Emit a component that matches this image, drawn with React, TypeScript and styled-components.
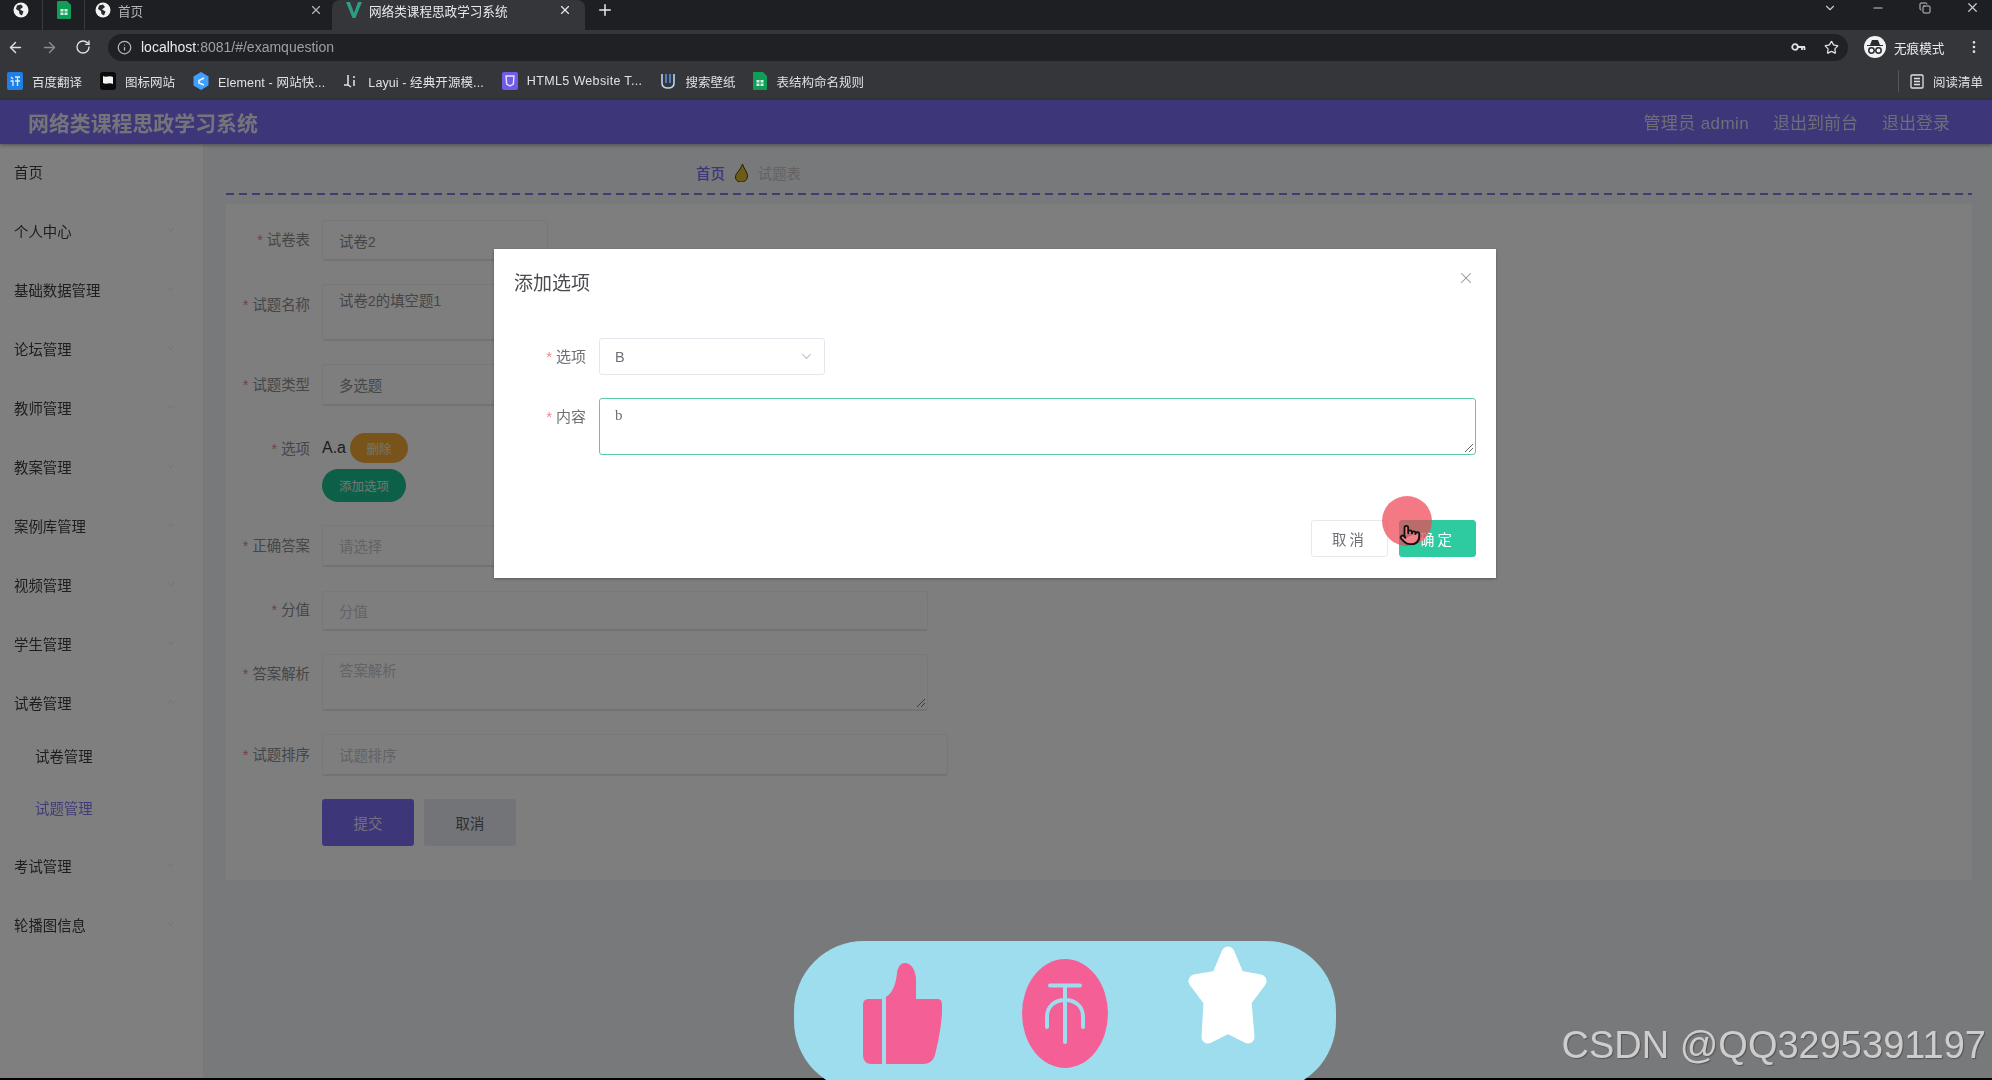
import styled, { createGlobalStyle } from "styled-components";
import {
  ArrowLeft,
  ArrowRight,
  ChevronDown,
  ChevronUp,
  Copy,
  Info,
  Minus,
  MoreVertical,
  Plus,
  Pointer,
  RotateCw,
  Star,
  X,
} from "lucide-react";

const GlobalStyle = createGlobalStyle`
  html, body {
    margin: 0;
    padding: 0;
    background: #000;
    overflow: hidden;
  }
  * {
    box-sizing: border-box;
  }
`;

const FONT = `"Liberation Sans", "Noto Sans CJK SC", sans-serif`;

const Page = styled.div`
  position: relative;
  width: 1992px;
  height: 1080px;
  overflow: hidden;
  background: #000;
  font-family: ${FONT};
`;

/*----------------------------------
	Browser chrome
----------------------------------*/
const Chrome = styled.div`
  filter: blur(0.5px);
`;

const TabStrip = styled.div`
  height: 30px;
  background: #1e1f22;
  display: flex;
  align-items: stretch;
  padding-right: 12px;
`;

const PinnedTab = styled.div`
  width: 42px;
  padding-bottom: 10px;
  display: flex;
  align-items: center;
  justify-content: center;
  border-right: 1px solid #3a3b3f;
  &:first-child {
    width: 43px;
  }
`;

const Tab = styled.div<{ $active?: boolean }>`
  width: ${(p) => (p.$active ? "253px" : "247px")};
  display: flex;
  align-items: center;
  gap: 7px;
  padding: 0 ${(p) => (p.$active ? "13px" : "9px")} 10px ${(p) => (p.$active ? "14px" : "10px")};
  background: ${(p) => (p.$active ? "#35363a" : "transparent")};
  border-radius: 8px 8px 0 0;
  color: ${(p) => (p.$active ? "#e8eaed" : "#b4b6b9")};
  font-size: 12.6px;
`;

const TabTitle = styled.span`
  flex: 1;
  white-space: nowrap;
`;

const NewTab = styled.div`
  width: 40px;
  padding-bottom: 10px;
  display: flex;
  align-items: center;
  justify-content: center;
  color: #e8eaed;
`;

const WindowControls = styled.div`
  margin-left: auto;
  display: flex;
  align-items: center;
  gap: 34px;
  padding-bottom: 15px;
  color: #c6c8cb;
`;

const Toolbar = styled.div`
  height: 34px;
  background: #35363a;
  display: flex;
  align-items: center;
  padding: 0 9px 0 7px;
  color: #dfe1e4;
`;

const NavIcons = styled.div`
  width: 101px;
  display: flex;
  align-items: center;
  gap: 17px;
`;

const AddressBar = styled.div`
  width: 1740px;
  height: 27px;
  border-radius: 14px;
  background: #202124;
  display: flex;
  align-items: center;
  gap: 9px;
  padding: 0 9px 0 9px;
  font-size: 14px;
  color: #e8eaed;
`;

const UrlRest = styled.span`
  color: #9aa0a6;
`;

const AddressActions = styled.div`
  margin-left: auto;
  display: flex;
  align-items: center;
  gap: 18px;
  color: #dfe1e4;
`;

const Incognito = styled.div`
  margin-left: 16px;
  display: flex;
  align-items: center;
  gap: 8px;
  font-size: 12.6px;
  color: #e8eaed;
`;

const IncognitoBadge = styled.div`
  width: 22px;
  height: 22px;
  border-radius: 50%;
  background: #f1f3f4;
  display: flex;
  align-items: center;
  justify-content: center;
`;

const MenuDots = styled.div`
  margin-left: 22px;
  display: flex;
`;

const BookmarkBar = styled.div`
  height: 36px;
  background: #35363a;
  display: flex;
  align-items: center;
  gap: 18px;
  padding: 0 9px 2px 7px;
  font-size: 12.5px;
  color: #dfe1e4;
`;

const Bookmark = styled.div<{ $spacing?: number }>`
  display: flex;
  align-items: center;
  gap: 9px;
  white-space: nowrap;
  letter-spacing: ${(p) => p.$spacing ?? 0}px;
`;

const ReadingList = styled(Bookmark)`
  margin-left: auto;
  border-left: 1px solid #55565a;
  padding-left: 11px;
  height: 22px;
`;

/*----------------------------------
	Site
----------------------------------*/
const Site = styled.div`
  height: 978px;
  display: flex;
  flex-direction: column;
  filter: blur(0.6px);
`;

const SiteHeader = styled.header`
  height: 44px;
  flex: none;
  background: #7a6cf0;
  box-shadow: 0 1px 4px rgba(0, 0, 0, 0.4);
  display: flex;
  align-items: center;
  padding: 0 42px 0 28px;
  position: relative;
`;

const SiteTitle = styled.div`
  font-size: 20.9px;
  font-weight: 700;
  color: #e8e8f5;
`;

const HeaderLinks = styled.div`
  margin-left: auto;
  display: flex;
  gap: 24px;
  padding-bottom: 2px;
  font-size: 17px;
  color: #dcdcef;
`;

const HeaderUser = styled.span`
  letter-spacing: 0.4px;
`;

const SiteBody = styled.div`
  flex: 1;
  display: flex;
  min-height: 0;
`;

const Sidebar = styled.nav`
  width: 203px;
  flex: none;
  background: #fff;
  box-shadow: 2px 0 12px rgba(0, 0, 0, 0.08);
`;

const MenuItem = styled.div`
  height: 59px;
  display: flex;
  align-items: center;
  justify-content: space-between;
  padding: 0 26px 5px 14px;
  font-size: 14.4px;
  color: #3c3c3c;
  svg {
    color: #e6e6e6;
  }
`;

const SubMenuItem = styled.div<{ $active?: boolean }>`
  height: 52px;
  padding: 0 0 9px 35px;
  display: flex;
  align-items: center;
  font-size: 14.4px;
  color: ${(p) => (p.$active ? "#8378f0" : "#3c3c3c")};
`;

const Main = styled.main`
  flex: 1;
  background: #f1f2f5;
  padding: 0 20px 0 23px;
`;

const Breadcrumb = styled.div`
  height: 51px;
  background: repeating-linear-gradient(90deg, #8077e6 0 8px, transparent 8px 13px) bottom / 100% 2px no-repeat;
  display: flex;
  align-items: center;
  gap: 10px;
  padding: 6px 0 0 470px;
  font-size: 14.4px;
  color: #c6c6c8;
`;

const Crumb = styled.span`
  color: #7a6cf0;
  font-weight: 500;
`;

const FormCard = styled.div`
  margin-top: 9px;
  height: 676px;
  background: #fcfcfd;
  padding-top: 16px;
  display: flex;
  flex-direction: column;
  gap: 23px;
`;

const Row = styled.div`
  display: flex;
  align-items: flex-start;
`;

const Label = styled.label<{ $line?: number }>`
  width: 84px;
  margin-right: 12px;
  text-align: right;
  line-height: ${(p) => p.$line ?? 40}px;
  font-size: 14.4px;
  color: #8a8c90;
  white-space: nowrap;
  &::before {
    content: "*";
    color: #e8828a;
    margin-right: 4px;
  }
`;

const Field = styled.div<{ $w: number; $h: number; $top?: boolean }>`
  position: relative;
  width: ${(p) => p.$w}px;
  height: ${(p) => p.$h}px;
  border: 1px solid #f0f0f2;
  border-bottom: 2px solid #e6e6e8;
  border-radius: 3px;
  background: #fdfdfd;
  display: flex;
  align-items: ${(p) => (p.$top ? "flex-start" : "center")};
  padding: ${(p) => (p.$top ? "4px 16px" : "0 16px")};
  font-size: 14.4px;
  color: #8a8c90;
  svg {
    color: #c0c4cc;
  }
`;

const Placeholder = styled.span`
  color: #c4c6cc;
`;

const Grip = styled.svg`
  position: absolute;
  right: 1px;
  bottom: 1px;
`;

const OptionGroup = styled.div`
  display: flex;
  flex-direction: column;
  gap: 1px;
  margin-top: -1px;
  align-items: flex-start;
`;

const OptionLine = styled.div`
  height: 40px;
  display: flex;
  align-items: center;
  gap: 4px;
  font-size: 16px;
  color: #3a3a3a;
`;

const PillButton = styled.div<{ $bg: string; $w: number; $h: number }>`
  width: ${(p) => p.$w}px;
  height: ${(p) => p.$h}px;
  border-radius: 17px;
  background: ${(p) => p.$bg};
  color: #e9e9e9;
  font-size: 12.5px;
  display: flex;
  align-items: center;
  justify-content: center;
`;

const FormButtons = styled.div`
  display: flex;
  gap: 10px;
  margin-left: 96px;
`;

const FormButton = styled.div<{ $bg: string; $color: string }>`
  width: 92px;
  height: 47px;
  border-radius: 3px;
  background: ${(p) => p.$bg};
  color: ${(p) => p.$color};
  font-size: 14.4px;
  display: flex;
  align-items: center;
  justify-content: center;
`;

/*----------------------------------
	Dialog
----------------------------------*/
const Mask = styled.div`
  position: absolute;
  left: 0;
  right: 0;
  top: 100px;
  height: 978px;
  background: rgba(0, 0, 0, 0.5);
  padding: 149px 2px 0 0;
`;

const Dialog = styled.div`
  position: relative;
  width: 1002px;
  height: 329px;
  margin: 0 auto;
  background: #fff;
  box-shadow: 0 1px 3px rgba(0, 0, 0, 0.3);
  padding: 20px 20px 21px;
  display: flex;
  flex-direction: column;
  filter: blur(0.6px);
`;

const DialogHead = styled.div`
  display: flex;
  align-items: flex-start;
  justify-content: space-between;
  height: 69px;
`;

const DialogTitle = styled.div`
  font-size: 19px;
  line-height: 30px;
  color: #4a4c50;
`;

const CloseIcon = styled.div`
  display: flex;
  color: #909399;
  margin: 0 1px 0 0;
`;

const DialogRow = styled.div`
  display: flex;
  align-items: flex-start;
  margin-bottom: 23px;
`;

const DialogLabel = styled.label`
  width: 85px;
  text-align: right;
  padding-right: 13px;
  line-height: 37px;
  font-size: 15px;
  color: #6e7076;
  white-space: nowrap;
  &::before {
    content: "*";
    color: #f0888a;
    margin-right: 4px;
  }
`;

const DialogSelect = styled.div`
  width: 226px;
  height: 37px;
  border: 1px solid #e4e7ed;
  border-radius: 3px;
  display: flex;
  align-items: center;
  justify-content: space-between;
  padding: 0 10px 0 15px;
  font-size: 14.4px;
  color: #6e7076;
  svg {
    color: #c0c4cc;
  }
`;

const DialogText = styled.div`
  position: relative;
  width: 877px;
  height: 57px;
  border: 1.5px solid #5cc9a7;
  border-radius: 3px;
  padding: 8px 15px;
  font-size: 15px;
  font-family: "Liberation Serif", serif;
  color: #6e7076;
`;

const DialogFoot = styled.div`
  margin-top: auto;
  display: flex;
  justify-content: flex-end;
  gap: 11px;
`;

const DialogButton = styled.div<{ $primary?: boolean }>`
  width: 77px;
  height: 37px;
  border-radius: 3px;
  display: flex;
  align-items: center;
  justify-content: center;
  letter-spacing: 3px;
  font-size: 14.4px;
  background: ${(p) => (p.$primary ? "#2fcba0" : "#fff")};
  color: ${(p) => (p.$primary ? "#fff" : "#6e7076")};
  border: 1px solid ${(p) => (p.$primary ? "#2fcba0" : "#e8e8ea")};
`;

const ClickHalo = styled.div`
  position: absolute;
  left: 888px;
  top: 247px;
  width: 50px;
  height: 50px;
  border-radius: 50%;
  background: rgba(238, 70, 85, 0.72);
  display: flex;
  align-items: center;
  justify-content: center;
  padding: 28px 0 0 6px;
  color: #111;
  svg {
    fill: #f4818a;
    flex: none;
  }
`;

/*----------------------------------
	Floating overlays
----------------------------------*/
const ActionBar = styled.div`
  position: absolute;
  left: 794px;
  top: 941px;
  width: 542px;
  height: 150px;
  border-radius: 70px;
  background: #9edded;
  display: flex;
  justify-content: center;
  gap: 80px;
`;

const ActionIcon = styled.svg<{ $top: number }>`
  margin-top: ${(p) => p.$top}px;
  flex: none;
`;

const Watermark = styled.div`
  position: absolute;
  right: 6px;
  bottom: 13px;
  font-family: "Liberation Sans", sans-serif;
  font-size: 38px;
  line-height: 44px;
  color: #cdcdcd;
  text-shadow: 1px 1px 1px rgba(60, 60, 60, 0.6);
`;

const GlobeIcon = () => (
  <svg width="16" height="16" viewBox="0 0 16 16">
    <circle cx="8" cy="8" r="7.5" fill="#f1f3f4" />
    <path d="M4 3.5 L8 2.5 L10 5 L7 7.5 L10.5 9.5 L9 13.5 L6.5 12 L6 9 L3 7 Z" fill="#2a2b2e" />
  </svg>
);

const SheetIcon = ({ size = 14 }: { size?: number }) => (
  <svg width={size} height={size + 4} viewBox="0 0 14 18">
    <path d="M1 0 H10 L14 4 V17 a1 1 0 0 1 -1 1 H1 a1 1 0 0 1 -1 -1 V1 a1 1 0 0 1 1 -1 Z" fill="#0f9d58" />
    <rect x="3.5" y="8" width="7" height="6" fill="#d7f0e2" />
    <path d="M3.5 11 H10.5 M7 8 V14" stroke="#0f9d58" strokeWidth="1" />
  </svg>
);

const VueIcon = () => (
  <svg width="16" height="18" viewBox="0 0 16 18">
    <path d="M0 1 H4 L8 12 L12 1 H16 L9.5 17 H6.5 Z" fill="#2e9c82" />
  </svg>
);

const KeyIcon = () => (
  <svg width="15" height="10" viewBox="0 0 15 10" fill="none" stroke="#dfe1e4" strokeWidth="1.8">
    <circle cx="4" cy="5" r="2.8" />
    <path d="M7 5 H14 M11 5 V8 M13.5 5 V8" />
  </svg>
);

const BookmarkIcons = {
  translate: (
    <svg width="16" height="18" viewBox="0 0 16 18">
      <rect width="16" height="18" rx="2" fill="#1f7fe6" />
      <path d="M4 5 L6 7 M3.5 9 H6 V14 M8 5 H13 M10.5 5 V14 M8 9 H13" stroke="#dcecff" strokeWidth="1.3" fill="none" />
    </svg>
  ),
  flag: (
    <svg width="16" height="18" viewBox="0 0 16 18">
      <rect width="16" height="18" rx="3" fill="#0a0a0a" />
      <path d="M3 4 C6 6 9 3 13 5 V12 C9 10 6 13 3 11 Z" fill="#f2f2f2" />
    </svg>
  ),
  element: (
    <svg width="16" height="18" viewBox="0 0 16 18">
      <path d="M8 0 L15.5 4.5 V13.5 L8 18 L0.5 13.5 V4.5 Z" fill="#409eff" />
      <path d="M11 6 L6 8.5 V11 L11 13" stroke="#eaf4ff" strokeWidth="1.6" fill="none" />
    </svg>
  ),
  layui: (
    <svg width="16" height="18" viewBox="0 0 16 18">
      <path d="M5 3 V13 H1 M5 13 L8 15 M11 8 V14" stroke="#e6e6e6" strokeWidth="1.5" fill="none" />
      <circle cx="11" cy="5" r="1" fill="#e6e6e6" />
    </svg>
  ),
  html: (
    <svg width="16" height="18" viewBox="0 0 16 18">
      <rect width="16" height="18" rx="2" fill="#6c5ce7" />
      <path d="M4 4 H12 L11.3 12 L8 14 L4.7 12 Z" stroke="#e6e2ff" strokeWidth="1.4" fill="none" />
    </svg>
  ),
  wallpaper: (
    <svg width="16" height="18" viewBox="0 0 16 18">
      <path d="M2 2 V11 C2 15 5 16 8 16 C11 16 14 15 14 11 V2" stroke="#b9d4f5" strokeWidth="1.6" fill="none" />
      <path d="M6 2 V11 M10 2 V11" stroke="#5f8fd8" strokeWidth="1.6" />
    </svg>
  ),
};

const menu = ["首页", "个人中心", "基础数据管理", "论坛管理", "教师管理", "教案管理", "案例库管理", "视频管理", "学生管理"];

const App = () => {
  return (
    <Page>
      <GlobalStyle />
      <Chrome>
        <TabStrip>
          <PinnedTab>
            <GlobeIcon />
          </PinnedTab>
          <PinnedTab>
            <SheetIcon />
          </PinnedTab>
          <Tab>
            <GlobeIcon />
            <TabTitle>首页</TabTitle>
            <X size={14} />
          </Tab>
          <Tab $active>
            <VueIcon />
            <TabTitle>网络类课程思政学习系统</TabTitle>
            <X size={14} />
          </Tab>
          <NewTab>
            <Plus size={18} />
          </NewTab>
          <WindowControls>
            <ChevronDown size={14} />
            <Minus size={14} />
            <Copy size={12} />
            <X size={15} />
          </WindowControls>
        </TabStrip>
        <Toolbar>
          <NavIcons>
            <ArrowLeft size={17} />
            <ArrowRight size={17} color="#8b8d91" />
            <RotateCw size={16} />
          </NavIcons>
          <AddressBar>
            <Info size={15} color="#b5b7ba" />
            <span>
              localhost<UrlRest>:8081/#/examquestion</UrlRest>
            </span>
            <AddressActions>
              <KeyIcon />
              <Star size={15} />
            </AddressActions>
          </AddressBar>
          <Incognito>
            <IncognitoBadge>
              <svg width="18" height="16" viewBox="0 0 18 16">
                <path d="M4 6 L6 1 H12 L14 6 H17 V7 H1 V6 Z" fill="#2a2b2e" />
                <circle cx="5.5" cy="11.5" r="2.7" fill="none" stroke="#2a2b2e" strokeWidth="1.5" />
                <circle cx="12.5" cy="11.5" r="2.7" fill="none" stroke="#2a2b2e" strokeWidth="1.5" />
              </svg>
            </IncognitoBadge>
            无痕模式
          </Incognito>
          <MenuDots>
            <MoreVertical size={16} />
          </MenuDots>
        </Toolbar>
        <BookmarkBar>
          <Bookmark>{BookmarkIcons.translate}百度翻译</Bookmark>
          <Bookmark>{BookmarkIcons.flag}图标网站</Bookmark>
          <Bookmark $spacing={0.15}>{BookmarkIcons.element}Element - 网站快...</Bookmark>
          <Bookmark $spacing={0.1}>{BookmarkIcons.layui}Layui - 经典开源模...</Bookmark>
          <Bookmark $spacing={0.35}>{BookmarkIcons.html}HTML5 Website T...</Bookmark>
          <Bookmark>{BookmarkIcons.wallpaper}搜索壁纸</Bookmark>
          <Bookmark>
            <SheetIcon />
            表结构命名规则
          </Bookmark>
          <ReadingList>
            <svg width="14" height="15" viewBox="0 0 14 15" fill="none" stroke="#dfe1e4" strokeWidth="1.3">
              <rect x="1" y="1" width="12" height="13" rx="1" />
              <path d="M4 4.5 H10 M4 7.5 H10 M4 10.5 H10" />
            </svg>
            阅读清单
          </ReadingList>
        </BookmarkBar>
      </Chrome>

      <Site>
        <SiteHeader>
          <SiteTitle>网络类课程思政学习系统</SiteTitle>
          <HeaderLinks>
            <HeaderUser>管理员 admin</HeaderUser>
            <span>退出到前台</span>
            <span>退出登录</span>
          </HeaderLinks>
        </SiteHeader>
        <SiteBody>
          <Sidebar>
            {menu.map((name, i) => (
              <MenuItem key={name}>
                {name}
                {i > 0 && <ChevronDown size={12} />}
              </MenuItem>
            ))}
            <MenuItem>
              试卷管理
              <ChevronUp size={12} />
            </MenuItem>
            <SubMenuItem>试卷管理</SubMenuItem>
            <SubMenuItem $active>试题管理</SubMenuItem>
            <MenuItem>
              考试管理
              <ChevronDown size={12} />
            </MenuItem>
            <MenuItem>
              轮播图信息
              <ChevronDown size={12} />
            </MenuItem>
          </Sidebar>
          <Main>
            <Breadcrumb>
              <Crumb>首页</Crumb>
              <svg width="13" height="18" viewBox="0 0 12 18">
                <path d="M7 0 C8 4 12 8 12 12 C12 16 9 18 6 18 C2 18 0 16 0 13 C0 9 4 8 7 0 Z" fill="#d9b82e" stroke="#4c3e10" strokeWidth="1" />
              </svg>
              试题表
            </Breadcrumb>
            <FormCard>
              <Row>
                <Label>试卷表</Label>
                <Field $w={226} $h={41}>试卷2</Field>
              </Row>
              <Row>
                <Label $line={42}>试题名称</Label>
                <Field $w={606} $h={57} $top>试卷2的填空题1</Field>
              </Row>
              <Row>
                <Label $line={42}>试题类型</Label>
                <Field $w={226} $h={42}>多选题</Field>
              </Row>
              <Row>
                <Label>选项</Label>
                <OptionGroup>
                  <OptionLine>
                    A.a
                    <PillButton $bg="#f0a835" $w={58} $h={30}>删除</PillButton>
                  </OptionLine>
                  <PillButton $bg="#17c08e" $w={84} $h={33}>添加选项</PillButton>
                </OptionGroup>
              </Row>
              <Row>
                <Label $line={43}>正确答案</Label>
                <Field $w={226} $h={42}>
                  <Placeholder>请选择</Placeholder>
                </Field>
              </Row>
              <Row>
                <Label $line={38}>分值</Label>
                <Field $w={606} $h={40}>
                  <Placeholder>分值</Placeholder>
                </Field>
              </Row>
              <Row>
                <Label>答案解析</Label>
                <Field $w={606} $h={57} $top>
                  <Placeholder>答案解析</Placeholder>
                  <Grip width="10" height="10" viewBox="0 0 10 10">
                    <path d="M1 9 L9 1 M5 9 L9 5" stroke="#777" strokeWidth="1" />
                  </Grip>
                </Field>
              </Row>
              <Row>
                <Label $line={42}>试题排序</Label>
                <Field $w={626} $h={42}>
                  <Placeholder>试题排序</Placeholder>
                </Field>
              </Row>
              <FormButtons>
                <FormButton $bg="#7a6cf0" $color="#e6e3ff">提交</FormButton>
                <FormButton $bg="#e4e8ee" $color="#5c5f66">取消</FormButton>
              </FormButtons>
            </FormCard>
          </Main>
        </SiteBody>
      </Site>

      <Mask>
        <Dialog>
          <DialogHead>
            <DialogTitle>添加选项</DialogTitle>
            <CloseIcon>
              <X size={18} strokeWidth={1.4} />
            </CloseIcon>
          </DialogHead>
          <DialogRow>
            <DialogLabel>选项</DialogLabel>
            <DialogSelect>
              B
              <ChevronDown size={15} />
            </DialogSelect>
          </DialogRow>
          <DialogRow>
            <DialogLabel>内容</DialogLabel>
            <DialogText>
              b
              <Grip width="10" height="10" viewBox="0 0 10 10">
                <path d="M1 9 L9 1 M5 9 L9 5" stroke="#666" strokeWidth="1" />
              </Grip>
            </DialogText>
          </DialogRow>
          <DialogFoot>
            <DialogButton>取消</DialogButton>
            <DialogButton $primary>确定</DialogButton>
          </DialogFoot>
          <ClickHalo>
            <Pointer size={22} strokeWidth={2} />
          </ClickHalo>
        </Dialog>
      </Mask>

      <ActionBar>
        <ActionIcon $top={22} width="79" height="101" viewBox="0 0 79 101">
          <path d="M6 36 H19 V101 H8 C3 101 0 97 0 92 V42 C0 38 2 36 6 36 Z" fill="#f45f96" />
          <path d="M23 34 C30 30 33 20 34 10 C35 3 38 0 42 0 C47 0 52 5 53 15 L53 36 H75 Q79 36 79 42 L79 50 C78 65 75 80 72 92 C70 98 66 101 60 101 H23 Z" fill="#f45f96" />
        </ActionIcon>
        <ActionIcon $top={18} width="86" height="109" viewBox="0 0 86 109">
          <ellipse cx="43" cy="54.5" rx="43" ry="54.5" fill="#f45f96" />
          <path d="M28 26.5 H58 M43 26.5 V83 M25 68 V58 C25 47 33 41 43 41 C53 41 61 47 61 58 V68" stroke="#9edded" strokeWidth="4" fill="none" strokeLinecap="round" />
        </ActionIcon>
        <ActionIcon $top={4} width="79" height="101" viewBox="0 0 79 101">
          <polygon
            points="40,8 50,32 72,36 57,56 60,92 40,82 20,92 22,56 7,36 30,32"
            fill="#fff"
            stroke="#fff"
            strokeWidth="13"
            strokeLinejoin="round"
          />
        </ActionIcon>
      </ActionBar>
      <Watermark>CSDN @QQ3295391197</Watermark>
    </Page>
  );
};

export default App;
